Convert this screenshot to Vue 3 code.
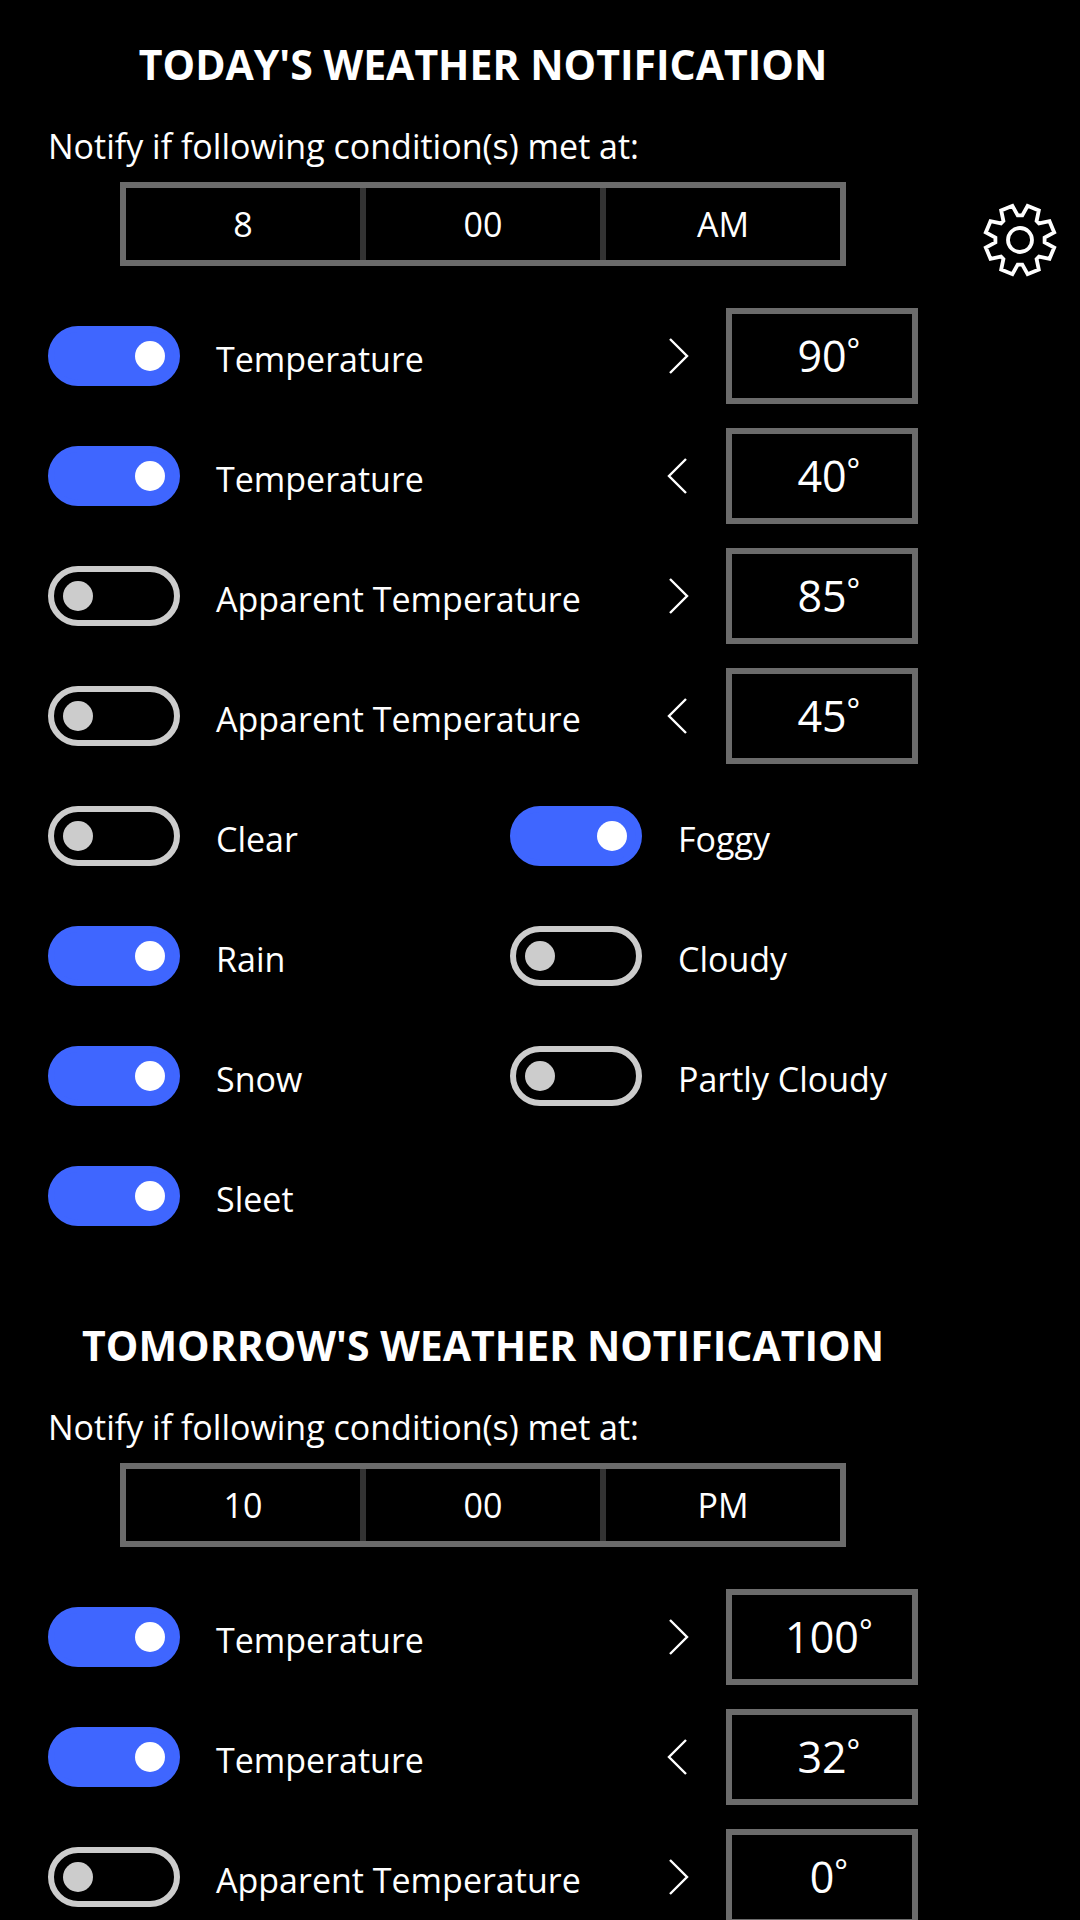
<template>
  <div class="page">
    <main class="settings">
      <section v-for="s in sections" :key="s.id" class="section">
        <h2>{{ s.title }}</h2>
        <p :id="s.id + '-hint'" class="hint">Notify if following condition(s) met at:</p>

        <div class="time" role="group" :aria-labelledby="s.id + '-hint'">
          <select v-model="s.hour" aria-label="Hour">
            <option v-for="h in 12" :key="h" :value="String(h)">{{ h }}</option>
          </select>
          <select v-model="s.minute" aria-label="Minute">
            <option v-for="m in minutes" :key="m" :value="m">{{ m }}</option>
          </select>
          <select v-model="s.period" aria-label="AM or PM">
            <option value="AM">AM</option>
            <option value="PM">PM</option>
          </select>
        </div>

        <div class="limits">
          <div v-for="(l, i) in s.limits" :key="i" class="limit">
            <label class="switch">
              <input v-model="l.on" type="checkbox" role="switch">
              <span>{{ l.label }}</span>
            </label>
            <svg class="chevron" viewBox="0 0 36 36" role="img" :aria-label="l.above ? 'above' : 'below'">
              <polyline :points="l.above ? '10,1 27,18 10,35' : '26,1 9,18 26,35'" />
            </svg>
            <div class="degrees">
              <input v-model="l.value" type="text" inputmode="numeric" :aria-label="l.label + (l.above ? ' above' : ' below')">
              <span class="unit" :style="{ left: `calc(50% + ${l.value.length / 2}ch)` }"><small>°</small></span>
            </div>
          </div>
        </div>

        <div v-if="s.conditions.length" class="conditions">
          <label v-for="c in s.conditions" :key="c.label" class="switch">
            <input v-model="c.on" type="checkbox" role="switch">
            <span>{{ c.label }}</span>
          </label>
        </div>
      </section>
    </main>

    <aside class="side">
      <button type="button" class="gear" aria-label="Settings">
        <svg viewBox="-37 -37 74 74">
          <path d="M2.3-24.6 7.6-34.2 18.8-29.5 16.6-19 19-16.6 29.5-18.8 34.2-7.6 24.6-2.3V2.3L34.2 7.6 29.5 18.8 19 16.6 16.6 19 18.8 29.5 7.6 34.2 2.3 24.6H-2.3L-7.6 34.2-18.8 29.5-16.6 19-19 16.6-29.5 18.8-34.2 7.6-24.6 2.3V-2.3L-34.2-7.6-29.5-18.8-19-16.6-16.6-19-18.8-29.5-7.6-34.2-2.3-24.6Z" />
          <circle r="12" />
        </svg>
      </button>
    </aside>
  </div>
</template>

<script setup>
import { ref } from 'vue'

const minutes = ['00', '15', '30', '45']

const sections = ref([
  {
    id: 'today',
    title: "TODAY'S WEATHER NOTIFICATION",
    hour: '8',
    minute: '00',
    period: 'AM',
    limits: [
      { label: 'Temperature', on: true, above: true, value: '90' },
      { label: 'Temperature', on: true, above: false, value: '40' },
      { label: 'Apparent Temperature', on: false, above: true, value: '85' },
      { label: 'Apparent Temperature', on: false, above: false, value: '45' }
    ],
    conditions: [
      { label: 'Clear', on: false },
      { label: 'Rain', on: true },
      { label: 'Snow', on: true },
      { label: 'Sleet', on: true },
      { label: 'Foggy', on: true },
      { label: 'Cloudy', on: false },
      { label: 'Partly Cloudy', on: false }
    ]
  },
  {
    id: 'tomorrow',
    title: "TOMORROW'S WEATHER NOTIFICATION",
    hour: '10',
    minute: '00',
    period: 'PM',
    limits: [
      { label: 'Temperature', on: true, above: true, value: '100' },
      { label: 'Temperature', on: true, above: false, value: '32' },
      { label: 'Apparent Temperature', on: false, above: true, value: '0' }
    ],
    conditions: []
  }
])
</script>

<style>
body {
  margin: 0;
  background: #000;
}
</style>

<style scoped>
.page {
  display: flex;
  height: 100vh;
  overflow: hidden;
  background: #000;
  color: #fff;
  font-family: "Open Sans", "Noto Sans", sans-serif;
  font-size: 34px;
}

.settings {
  flex: 1;
  min-width: 0;
  padding: 0 42px 0 48px;
}

.section {
  padding: 36px 0 37px;
}

h2 {
  margin: 0 0 31px;
  font-size: 41px;
  line-height: 56px;
  font-weight: 700;
  text-align: center;
  white-space: nowrap;
}

.hint {
  margin: 0 0 13px;
  line-height: 46px;
}

.time {
  display: grid;
  grid-template-columns: repeat(3, 1fr);
  gap: 6px;
  margin: 0 72px 42px;
  border: 6px solid #6b6b6b;
  background: #333;
}

.time select {
  appearance: none;
  height: 72px;
  padding: 0;
  border: 0;
  border-radius: 0;
  background: #000;
  color: inherit;
  font: inherit;
  text-align: center;
  text-align-last: center;
}

.limits {
  display: grid;
  gap: 24px;
}

.limit {
  display: flex;
  align-items: center;
  gap: 30px;
}

.limit .switch {
  flex: 1;
}

.switch {
  display: flex;
  align-items: center;
  gap: 36px;
  height: 96px;
  white-space: nowrap;
}

.switch span {
  padding-top: 6px;
}

.switch input {
  appearance: none;
  display: flex;
  align-items: center;
  box-sizing: border-box;
  flex: none;
  width: 132px;
  height: 60px;
  margin: 0;
  padding: 0 9px;
  border: 6px solid #ccc;
  border-radius: 30px;
}

.switch input::before {
  content: "";
  width: 30px;
  height: 30px;
  border-radius: 50%;
  background: #ccc;
}

.switch input:checked {
  justify-content: flex-end;
  border-color: #3f66ff;
  background: #3f66ff;
}

.switch input:checked::before {
  background: #fff;
}

.chevron {
  flex: none;
  width: 36px;
  height: 36px;
  fill: none;
  stroke: #fff;
  stroke-width: 2.4;
}

.degrees {
  position: relative;
  flex: none;
  width: 192px;
  font-size: 43px;
  line-height: 76px;
}

.degrees input {
  display: block;
  box-sizing: border-box;
  width: 100%;
  height: 96px;
  padding: 0 0 2px;
  border: 6px solid #6b6b6b;
  border-radius: 0;
  background: #000;
  color: inherit;
  font: inherit;
  text-align: center;
}

/* the degree sign hangs off the centred number */
.unit {
  position: absolute;
  top: 0;
  pointer-events: none;
}

.unit small {
  font-size: 32px;
}

.conditions {
  display: grid;
  grid-template-columns: 1fr 1fr;
  grid-template-rows: repeat(4, auto);
  grid-auto-flow: column;
  gap: 24px 54px;
  margin-top: 24px;
}

.side {
  flex: none;
  width: 120px;
  padding-top: 203px;
  text-align: center;
}

.gear {
  padding: 0;
  border: 0;
  background: none;
  cursor: pointer;
}

.gear svg {
  display: block;
  width: 74px;
  height: 74px;
  fill: none;
  stroke: #fff;
  stroke-width: 3.8;
}
</style>
